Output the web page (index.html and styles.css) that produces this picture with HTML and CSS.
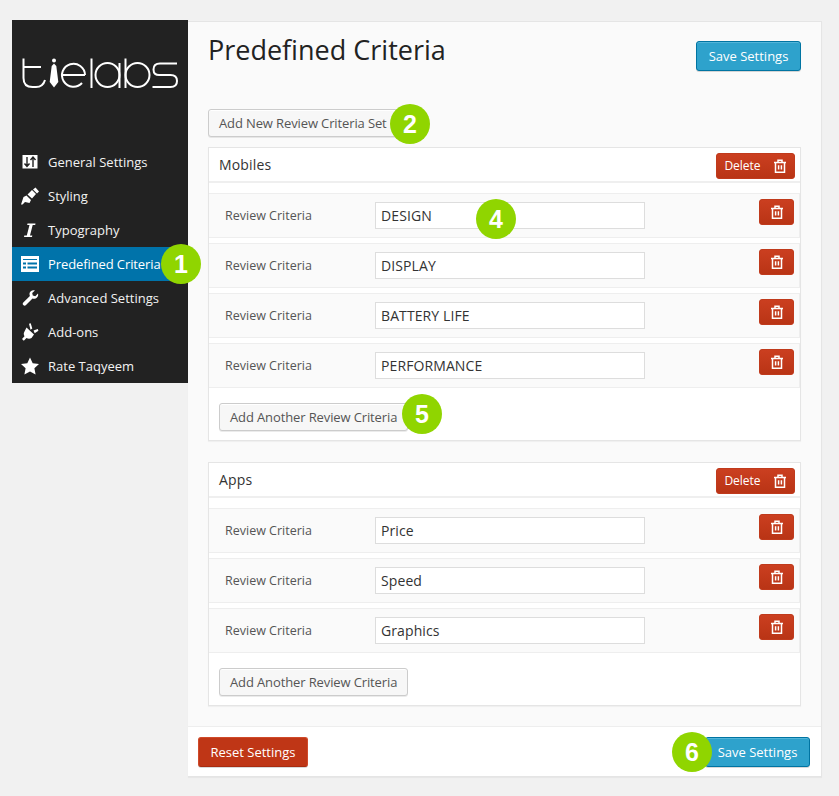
FILE: index.html
```html
<!DOCTYPE html>
<html lang="en">
<head>
<meta charset="utf-8">
<title>Predefined Criteria</title>
<link rel="stylesheet" href="styles.css">
</head>
<body>
<svg class="defs" width="0" height="0" aria-hidden="true">
  <defs>
    <symbol id="trash" viewBox="0 0 14 14">
      <path d="M1 3.500h12M2.500 3.500v9.700h9V3.500M5 3.500V1.200h4v2.300M5.600 6.200v4.300M8.400 6.200v4.300" fill="none" stroke="currentColor" stroke-width="1.500"/>
    </symbol>
  </defs>
</svg>
<div class="layout">
  <aside class="sidebar">
    <div class="logo">
      <svg width="176" height="100" viewBox="0 0 176 100" fill="none" stroke="#fff" stroke-width="2">
        <path d="M11.500 38.500V58Q11.500 67 20.500 67H24Q31 67 33 60M11.500 47H29"/>
        <path d="M42 43.500l-2.300 2.500-2 16 4.300 5.500 4.300-5.500-2-16z" fill="#fff" stroke="none"/>
        <circle cx="42" cy="40.500" r="2" fill="#fff" stroke="none"/>
        <path d="M50.500 55H73M73 55A11.500 11.500 0 1 0 70 63"/>
        <path d="M79.500 38.500V68"/>
        <circle cx="95.500" cy="55" r="12"/>
        <path d="M107.500 43V68"/>
        <path d="M113.500 38.500V68"/>
        <circle cx="125.500" cy="55" r="12"/>
        <path d="M165 43.500H148Q141.500 43.500 141.500 49.500T148 55H158.500Q165 55 165 61T158.500 67H140.500"/>
      </svg>
    </div>
    <nav class="menu">
      <a class="menu-item">
        <svg class="menu-icon" viewBox="0 0 18 18"><path fill="#fff" d="M1.500 2h15v13.500h-15z"/><path fill="none" stroke="#222" stroke-width="1.400" d="M6 4v9M12 5v9M3.500 10.500 6 13.500 8.500 10.500M9.500 7 12 4 14.500 7"/></svg>
        General Settings
      </a>
      <a class="menu-item">
        <svg class="menu-icon" viewBox="0 0 18 18"><path fill="#fff" d="M0 17.500 2.500 10 5.500 8.500 10 13 8.500 16 4 15 1.500 17.500zM6.500 7.500 11 3 15 7 11 11.500zM12 2.500 14.500.5 18 4.500 16 6.500z"/></svg>
        Styling
      </a>
      <a class="menu-item">
        <svg class="menu-icon" viewBox="0 0 18 18"><path fill="#fff" d="M6.500 2.500h8l-.3 1.500h-2.500L9 14.500h2.300l-.3 1.500H3l.3-1.500h2.500L8.500 4H6.200z"/></svg>
        Typography
      </a>
      <a class="menu-item active">
        <svg class="menu-icon" viewBox="0 0 18 18"><path fill="#fff" d="M0 1h18v16H0z"/><path fill="#0073aa" d="M2 4h14v1H2zM2 7.500h3v2H2zM6.500 7.500H16v2H6.500zM2 11.500h3v2H2zM6.500 11.500H16v2H6.500z"/></svg>
        <span class="menu-label">Predefined Criteria</span>
        <span class="badge badge-side">1</span>
      </a>
      <a class="menu-item">
        <svg class="menu-icon" viewBox="0 0 18 18"><path fill="#fff" d="M17 4.500 14.300 7.200 11.800 6.600 11.200 4.100 13.900 1.500C11.500.6 8.800 2 8.500 4.500 8.400 5.400 8.600 6.200 8.900 6.900L2.300 13.500C1.500 14.300 1.500 15.300 2.300 16.100S4.200 16.900 5 16.100L11.500 9.600C14.300 10.700 18 8.300 17 4.500z"/></svg>
        Advanced Settings
      </a>
      <a class="menu-item">
        <svg class="menu-icon" viewBox="0 0 18 18"><path fill="#fff" d="M5.500 4.500 13 11.500 10.500 15C9 16 7 16 5.500 15L2.800 17.800 1 16 3.500 13.200C2.500 11.500 2.500 10 3.500 8.500zM8 .8 9.700.3 11.300 5.500 9.500 6.800zM12.500 7.500 16.800 6 17.400 7.700 13.700 10.200z"/></svg>
        Add-ons
      </a>
      <a class="menu-item">
        <svg class="menu-icon" viewBox="0 0 18 18"><path fill="#fff" d="M9 .5l2.700 5.700 6.300.8-4.600 4.300 1.200 6.200L9 14.500l-5.600 3 1.200-6.200L0 7l6.300-.8z"/></svg>
        Rate Taqyeem
      </a>
    </nav>
  </aside>

  <main class="panel">
    <div class="panel-body">
      <header class="panel-head">
        <h1>Predefined Criteria</h1>
        <button class="btn btn-blue">Save Settings</button>
      </header>
      <div class="add-set">
        <button class="btn btn-plain">Add New Review Criteria Set</button>
        <span class="badge badge-set">2</span>
      </div>

      <section class="set">
        <div class="set-head">
          <span class="set-name">Mobiles</span>
          <button class="btn btn-red btn-delete">Delete <svg class="trash"><use href="#trash"/></svg></button>
        </div>
        <div class="rows">
          <div class="row">
            <label class="row-label">Review Criteria</label>
            <div class="field">
              <input class="input" value="DESIGN">
              <span class="badge badge-input">4</span>
            </div>
            <button class="btn btn-red btn-icon" aria-label="Delete"><svg class="trash"><use href="#trash"/></svg></button>
          </div>
          <div class="row">
            <label class="row-label">Review Criteria</label>
            <div class="field"><input class="input" value="DISPLAY"></div>
            <button class="btn btn-red btn-icon" aria-label="Delete"><svg class="trash"><use href="#trash"/></svg></button>
          </div>
          <div class="row">
            <label class="row-label">Review Criteria</label>
            <div class="field"><input class="input" value="BATTERY LIFE"></div>
            <button class="btn btn-red btn-icon" aria-label="Delete"><svg class="trash"><use href="#trash"/></svg></button>
          </div>
          <div class="row">
            <label class="row-label">Review Criteria</label>
            <div class="field"><input class="input" value="PERFORMANCE"></div>
            <button class="btn btn-red btn-icon" aria-label="Delete"><svg class="trash"><use href="#trash"/></svg></button>
          </div>
        </div>
        <div class="set-foot">
          <div class="add-wrap">
            <button class="btn btn-plain">Add Another Review Criteria</button>
            <span class="badge badge-add">5</span>
          </div>
        </div>
      </section>

      <section class="set">
        <div class="set-head">
          <span class="set-name">Apps</span>
          <button class="btn btn-red btn-delete">Delete <svg class="trash"><use href="#trash"/></svg></button>
        </div>
        <div class="rows">
          <div class="row">
            <label class="row-label">Review Criteria</label>
            <div class="field"><input class="input" value="Price"></div>
            <button class="btn btn-red btn-icon" aria-label="Delete"><svg class="trash"><use href="#trash"/></svg></button>
          </div>
          <div class="row">
            <label class="row-label">Review Criteria</label>
            <div class="field"><input class="input" value="Speed"></div>
            <button class="btn btn-red btn-icon" aria-label="Delete"><svg class="trash"><use href="#trash"/></svg></button>
          </div>
          <div class="row">
            <label class="row-label">Review Criteria</label>
            <div class="field"><input class="input" value="Graphics"></div>
            <button class="btn btn-red btn-icon" aria-label="Delete"><svg class="trash"><use href="#trash"/></svg></button>
          </div>
        </div>
        <div class="set-foot">
          <div class="add-wrap">
            <button class="btn btn-plain">Add Another Review Criteria</button>
          </div>
        </div>
      </section>
    </div>
    <footer class="panel-foot">
      <button class="btn btn-reset">Reset Settings</button>
      <div class="save-wrap">
        <button class="btn btn-blue">Save Settings</button>
        <span class="badge badge-save">6</span>
      </div>
    </footer>
  </main>
</div>
</body>
</html>
```
FILE: styles.css
```css
* { box-sizing: border-box; }
html, body { margin: 0; }
body {
  background: #f1f1f1;
  font-family: "Open Sans", sans-serif;
  font-size: 13px;
  color: #444;
  height: 796px;
  overflow: hidden;
}
.defs { position: absolute; }
.layout {
  display: flex;
  align-items: flex-start;
  padding: 20px 17px 0 12px;
}

/* Sidebar */
.sidebar {
  width: 176px;
  flex: none;
  background: #222;
}
.logo { height: 125px; line-height: 0; }
.menu { display: flex; flex-direction: column; }
.menu-item {
  position: relative;
  display: flex;
  align-items: center;
  height: 34px;
  padding-left: 9px;
  gap: 9px;
  color: #f2f2f2;
  font-size: 13px;
}
.menu-item.active { background: #0073aa; color: #fff; }
.menu-label { letter-spacing: -.1px; }
.menu-icon { width: 18px; height: 18px; flex: none; }

/* Panel */
.panel {
  flex: 1;
  background: #fafafa;
  border: 1px solid #e5e5e5;
  border-left: 0;
  box-shadow: 0 1px 1px rgba(0, 0, 0, .04);
  margin-top: 1px;
  height: 756px;
  display: flex;
  flex-direction: column;
}
.panel-body { padding: 0 20px; flex: 1; min-height: 0; }
.panel-head {
  display: flex;
  justify-content: space-between;
  align-items: flex-start;
  height: 87px;
  padding-top: 19px;
}
h1 {
  margin: -9px 0 0;
  font-size: 27px;
  font-weight: 400;
  line-height: 36px;
  color: #222;
}

/* Buttons */
.btn {
  font-family: "Open Sans", sans-serif;
  font-size: 13px;
  line-height: 1;
  border-radius: 3px;
  cursor: pointer;
  white-space: nowrap;
  padding: 0;
}
.btn-blue {
  width: 105px;
  height: 30px;
  background: #2ea2cc;
  border: 1px solid #0074a2;
  box-shadow: inset 0 1px 0 rgba(120, 200, 230, .5), 0 1px 0 rgba(0, 0, 0, .15);
  color: #fff;
}
.btn-plain {
  height: 28px;
  padding: 0 10px;
  background: #f7f7f7;
  border: 1px solid #ccc;
  box-shadow: inset 0 1px 0 #fff, 0 1px 0 rgba(0, 0, 0, .08);
  color: #555;
  letter-spacing: -.12px;
}
.btn-red {
  display: inline-flex;
  align-items: center;
  justify-content: center;
  background: #c1361a;
  background-image: linear-gradient(#cb3f20, #b93415);
  border: 1px solid #c03a1c;
  color: #fff;
}
.btn-delete { width: 79px; height: 26px; gap: 12px; font-size: 12px; }
.btn-icon { width: 35px; height: 26px; }
.trash { width: 14px; height: 14px; flex: none; }
.btn-reset {
  width: 110px;
  height: 30px;
  background: #bf3616;
  border: 1px solid #d04a2a;
  border-bottom-color: #a82c10;
  color: #fff;
  box-shadow: 0 1px 0 rgba(0, 0, 0, .15);
}

/* Sets */
.add-set { position: relative; display: flex; height: 38px; align-items: flex-start; }
.set {
  background: #fff;
  border: 1px solid #e5e5e5;
  box-shadow: 0 1px 1px rgba(0, 0, 0, .04);
  margin-bottom: 21px;
}
.set-head {
  display: flex;
  justify-content: space-between;
  align-items: center;
  height: 35px;
  padding: 2px 5px 0 10px;
  border-bottom: 2px solid #efefef;
}
.set-name { font-size: 14px; letter-spacing: .15px; color: #333; margin-top: -2px; }
.rows { padding-top: 10px; }
.row {
  display: flex;
  align-items: flex-start;
  height: 45px;
  margin-bottom: 5px;
  background: #fafafa;
  border: 1px solid #eee;
  border-width: 1px 1px 1px 0;
  padding-top: 8px;
}
.row:last-child { margin-bottom: 0; }
.row-label {
  width: 166px;
  padding-left: 16px;
  font-size: 12.5px;
  line-height: 27px;
  color: #555;
}
.field { position: relative; width: 270px; }
.input {
  display: block;
  width: 270px;
  height: 27px;
  padding: 0 5px;
  border: 1px solid #ddd;
  background: #fff;
  font-family: "Open Sans", sans-serif;
  font-size: 14px;
  letter-spacing: .1px;
  color: #333;
  border-radius: 0;
}
.row .btn-icon { margin-left: auto; margin-right: 5px; margin-top: -3px; }
.set-foot { padding: 15px 10px 9px; }
.add-wrap { position: relative; display: inline-block; line-height: 0; }

/* Footer */
.panel-foot {
  display: flex;
  justify-content: space-between;
  align-items: flex-start;
  height: 50px;
  flex: none;
  padding: 10px 11px 0 10px;
  background: #fff;
  border-top: 1px solid #eee;
}
.save-wrap { position: relative; line-height: 0; }

/* Numbered callouts */
.badge {
  position: absolute;
  width: 40px;
  height: 40px;
  border-radius: 50%;
  background: #90d500;
  color: #fff;
  font-family: "Liberation Sans", Arial, sans-serif;
  font-weight: 700;
  font-size: 25px;
  line-height: 40px;
  text-align: center;
}
.badge-side { left: 149px; top: -3px; }
.badge-set { left: 182px; top: -5px; }
.badge-input { left: 101px; top: -3px; }
.badge-add { left: 183px; top: -9px; }
.badge-save { left: -33px; top: -5px; }
```
